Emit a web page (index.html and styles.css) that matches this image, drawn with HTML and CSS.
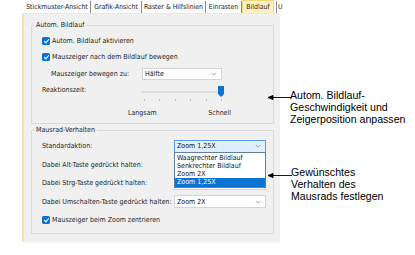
FILE: index.html
```html
<!DOCTYPE html>
<html lang="de">
<head>
  <meta charset="UTF-8">
  <title>Bildlauf</title>
  <link rel="stylesheet" href="styles.css">
</head>
<body>
  <div class="stage">
    <div class="dlg">
      <div class="tabs">
        <span class="tab t1">Stickmuster-Ansicht</span>
        <span class="tab t2">Grafik-Ansicht</span>
        <span class="tab t3">Raster &amp; Hilfslinien</span>
        <span class="tab t4">Einrasten</span>
        <span class="tab t5 active">Bildlauf</span>
        <span class="tab last">U</span>
      </div>

      <div class="page">
        <fieldset class="grp">
          <legend>Autom. Bildlauf</legend>
          <div class="grp-body body-scroll">
            <div class="row">
              <span class="box"></span>Autom. Bildlauf aktivieren
            </div>
            <div class="row">
              <span class="box"></span>Mauszeiger nach dem Bildlauf bewegen
            </div>
            <div class="row row-sel">
              <span class="lbl lbl-move">Mauszeiger bewegen zu:</span>
              <span class="sel sel-move">Hälfte<svg class="chev" viewBox="0 0 8 5"><path d="M1 1 L4 4 L7 1" /></svg></span>
            </div>
            <div class="row">
              <span class="lbl lbl-speed">Reaktionszeit:</span>
              <span class="slider">
                <span class="track"></span>
                <span class="thumb"></span>
                <span class="ticks"><i></i><i></i><i></i><i></i><i></i><i></i></span>
              </span>
            </div>
            <div class="speed-labels">
              <span>Langsam</span>
              <span>Schnell</span>
            </div>
          </div>
        </fieldset>

        <fieldset class="grp grp-wheel">
          <legend>Mausrad-Verhalten</legend>
          <div class="grp-body body-wheel">
            <div class="row row-w">
              <span class="lbl lbl-w">Standardaktion:</span>
              <span class="sel sel-w focus">Zoom 1,25X<svg class="chev" viewBox="0 0 8 5"><path d="M1 1 L4 4 L7 1" /></svg>
                <span class="droplist">
                  <span class="opt">Waagrechter Bildlauf</span>
                  <span class="opt">Senkrechter Bildlauf</span>
                  <span class="opt">Zoom 2X</span>
                  <span class="opt on">Zoom 1,25X</span>
                </span>
              </span>
            </div>
            <div class="row row-w">
              <span class="lbl lbl-w">Dabei Alt-Taste gedrückt halten:</span>
              <span class="sel sel-w"></span>
            </div>
            <div class="row row-w">
              <span class="lbl lbl-w">Dabei Strg-Taste gedrückt halten:</span>
              <span class="sel sel-w"></span>
            </div>
            <div class="row row-w">
              <span class="lbl lbl-w">Dabei Umschalten-Taste gedrückt halten:</span>
              <span class="sel sel-w">Zoom 2X<svg class="chev" viewBox="0 0 8 5"><path d="M1 1 L4 4 L7 1" /></svg></span>
            </div>
            <div class="row row-w">
              <span class="box"></span>Mauszeiger beim Zoom zentrieren
            </div>
          </div>
        </fieldset>
      </div>
    </div>

    <div class="note note-scroll">
      <svg class="arrow" viewBox="0 0 24 7"><polygon points="0,3.5 5,1.5 5,5.5" /><line x1="3" y1="3.5" x2="24" y2="3.5" /></svg>
      Autom. Bildlauf-<br>Geschwindigkeit und<br>Zeigerposition anpassen
    </div>
    <div class="note note-wheel">
      <svg class="arrow" viewBox="0 0 24 7"><polygon points="0,3.5 5,1.5 5,5.5" /><line x1="3" y1="3.5" x2="24" y2="3.5" /></svg>
      Gewünschtes<br>Verhalten des<br>Mausrads festlegen
    </div>
  </div>
</body>
</html>
```

FILE: styles.css
```css
* {
  box-sizing: border-box;
}
body {
  margin: 0;
  background: #fff;
  font-family: "DejaVu Sans Condensed", "DejaVu Sans", sans-serif;
  font-size: 7px;
  color: #1e1e1e;
}
.stage {
  position: relative;
  width: 415px;
  height: 255px;
  overflow: hidden;
}
.dlg {
  margin-left: 22px;
  width: 258px;
}

/* tab strip */
.tabs {
  display: flex;
  align-items: flex-end;
  height: 13px;
  padding-left: 2px;
}
.tab {
  flex: none;
  height: 12px;
  line-height: 12px;
  font-size: 6.9px;
  text-align: center;
  border-right: 1px solid #8c8c8c;
  background: #fbfbfb;
  white-space: nowrap;
}
.t1 { width: 67px; }
.t2 { width: 51px; }
.t3 { width: 64px; }
.t4 { width: 36px; }
.t5 { width: 32px; }
.tab.active {
  height: 13px;
  background: #fdf1c4;
  border: 1px solid #f1d67c;
  border-bottom: none;
  margin-right: 2px;
}
.tab.last {
  padding-left: 1px;
  border-left: 1px solid #8c8c8c;
  border-right: none;
}

/* tab page */
.page {
  position: relative;
  height: 229px;
  background: #f0f0f0;
  border-left: 2px solid #f8e6a2;
  border-top: 1px solid #f8ebb8;
  padding: 6px 6px 0 7px;
}
.grp {
  margin: 0;
  padding: 0;
  border: 1px solid #dadada;
  min-width: 0;
}
.grp legend {
  margin-left: 2px;
  padding: 0 2px;
  line-height: 10px;
}
.grp-wheel {
  margin-top: 1px;
}
.body-scroll {
  padding: 3px 0 5px 10px;
}
.body-wheel {
  padding: 2px 0 3.5px 10px;
}
.row {
  display: flex;
  align-items: center;
  height: 16px;
  white-space: nowrap;
}
.row-sel {
  margin-top: 1px;
}
.row-w {
  height: 18.5px;
}
.lbl {
  flex: none;
}
.lbl-move {
  width: 100px;
  padding-left: 9px;
}
.lbl-speed {
  width: 99px;
}
.lbl-w {
  width: 132px;
}

/* checkbox */
.box {
  position: relative;
  flex: none;
  width: 8px;
  height: 8px;
  margin-right: 2px;
  background: #0a74d4;
  border-radius: 1.5px;
}
.box::after {
  content: "";
  position: absolute;
  left: 2.5px;
  top: 1px;
  width: 2px;
  height: 4px;
  border: solid #fff;
  border-width: 0 1px 1px 0;
  transform: rotate(40deg);
}

/* combo boxes */
.sel {
  position: relative;
  display: flex;
  align-items: center;
  flex: none;
  background: #fff;
  border: 1px solid #d4d4d4;
  padding-left: 2px;
  color: #111;
}
.sel-move {
  width: 80px;
  height: 12px;
}
.sel-w {
  width: 92px;
  height: 13px;
}
.sel.focus {
  background: #e1eefb;
  border-color: #5a9fe0;
}
.chev {
  position: absolute;
  right: 4px;
  top: 50%;
  width: 6px;
  height: 4px;
  margin-top: -2px;
  fill: none;
  stroke: #8a8a8a;
  stroke-width: 1;
}

/* dropdown list of the open combo */
.droplist {
  position: absolute;
  left: -1px;
  top: 100%;
  z-index: 2;
  display: flex;
  flex-direction: column;
  width: 92px;
  padding-top: 1px;
  background: #fff;
  border: 1px solid #5d7fa8;
}
.opt {
  line-height: 8.2px;
  padding-left: 2px;
}
.opt.on {
  line-height: 9px;
  background: #0a74d4;
  color: #fff;
}

/* slider */
.slider {
  position: relative;
  flex: none;
  width: 83px;
  height: 16px;
}
.track {
  position: absolute;
  left: 0;
  right: 0;
  top: 9px;
  height: 2px;
  background: #dedede;
}
.thumb {
  position: absolute;
  left: 77px;
  top: 4px;
  width: 6px;
  height: 11px;
  background: #0a74d4;
  clip-path: polygon(0 0, 100% 0, 100% 72%, 50% 100%, 0 72%);
}
.ticks {
  position: absolute;
  left: 3px;
  right: 2px;
  top: 17px;
  display: flex;
  justify-content: space-between;
}
.ticks i {
  width: 1px;
  height: 2px;
  background: #c2c2c2;
}
.speed-labels {
  display: flex;
  justify-content: space-between;
  width: 103px;
  margin: 10px 0 0 86px;
  line-height: 10px;
}

/* annotations */
.note {
  position: absolute;
  font-family: "Liberation Sans", Arial, sans-serif;
  font-size: 10.6px;
  line-height: 12px;
  color: #000;
}
.note-scroll {
  left: 290px;
  top: 89px;
}
.note-wheel {
  left: 291px;
  top: 166px;
}
.arrow {
  position: absolute;
  left: -22px;
  top: 5px;
  width: 24px;
  height: 7px;
  fill: #000;
  stroke: #000;
  stroke-width: 0.9;
}
.note-wheel .arrow {
  left: -23px;
  top: 6px;
}
```
